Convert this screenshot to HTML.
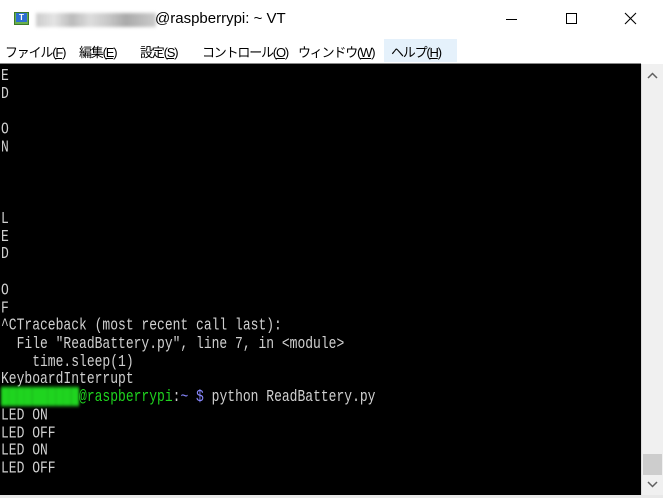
<!DOCTYPE html>
<html><head><meta charset="utf-8"><style>
*{margin:0;padding:0;box-sizing:border-box}
html,body{width:663px;height:498px;overflow:hidden}
body{background:#fff;position:relative;font-family:"Liberation Sans","Noto Sans CJK JP",sans-serif}
.title{position:absolute;left:0;top:0;width:663px;height:38px;background:#fff}
.title .txt{position:absolute;left:155px;top:10px;font-size:15px;color:#000}
.blur{position:absolute;top:13px;height:14px;filter:blur(1.5px)}
.menu{position:absolute;left:0;top:38px;width:663px;height:25px;background:#fff;font-size:13px;color:#000}
.menu span{position:absolute;top:4px;letter-spacing:-1.2px;white-space:nowrap}
.term{position:absolute;left:0;top:63px;width:641px;height:432px;background:#000;border-top:1px solid #888;overflow:hidden}
.term pre{position:absolute;left:1px;top:3px;font-family:"Liberation Mono",monospace;font-size:13px;line-height:13.74px;color:#d0d0d0;transform:scaleY(1.3);transform-origin:0 0;}
.sb{position:absolute;left:641px;top:64px;width:22px;height:431px;background:#f0f0f0;border-left:1px solid #ddd}
.bottom{position:absolute;left:0;top:495px;width:663px;height:3px;background:#e8e8e8}
</style></head><body>
<div class="title">
  <div style="position:absolute;left:14px;top:12px;width:15px;height:13px;background:#6ab04c;border:1px solid #3d7a2a"></div>
  <div style="position:absolute;left:16px;top:13px;width:11px;height:9px;background:#2e6fd1;color:#fff;font-size:8px;font-weight:bold;text-align:center;line-height:9px">T</div>
  <div class="blur" style="left:36px;width:120px;background:linear-gradient(90deg,#ccc 0,#e4e4e4 15%,#bbb 30%,#ddd 45%,#c8c8c8 60%,#aaa 75%,#ccc 100%)"></div>
  <div class="txt">@raspberrypi: ~ VT</div>
  <div style="position:absolute;left:506px;top:19px;width:11px;height:1px;background:#000"></div>
  <div style="position:absolute;left:566px;top:13px;width:11px;height:11px;border:1px solid #000"></div>
  <svg style="position:absolute;left:624px;top:12px" width="13" height="13"><path d="M1 1L12 12M12 1L1 12" stroke="#000" stroke-width="1.1"/></svg>
</div>
<div class="menu">
  <span style="left:5px">ファイル(<u>F</u>)</span>
  <span style="left:79px">編集(<u>E</u>)</span>
  <span style="left:140px">設定(<u>S</u>)</span>
  <span style="left:202px">コントロール(<u>O</u>)</span>
  <span style="left:298px">ウィンドウ(<u>W</u>)</span>
  <div style="position:absolute;left:384px;top:1px;width:73px;height:23px;background:#e5f1fb"></div>
  <span style="left:391px">ヘルプ(<u>H</u>)</span>
</div>
<div class="term"><pre>E
D

O
N



L
E
D

O
F
^CTraceback (most recent call last):
  File "ReadBattery.py", line 7, in &lt;module&gt;
    time.sleep(1)
KeyboardInterrupt
<span style="color:#1fd41f;filter:blur(1.2px)">&#9608;&#9608;&#9608;&#9608;&#9608;&#9608;&#9608;&#9608;&#9608;&#9608;</span><span style="color:#1fd41f">@raspberrypi</span>:<span style="color:#8888ff">~ $</span> python ReadBattery.py
LED ON
LED OFF
LED ON
LED OFF</pre></div>
<div class="sb">
  <svg style="position:absolute;left:5px;top:8px" width="11" height="7"><path d="M1 6L5.5 1.5L10 6" stroke="#606060" stroke-width="1.5" fill="none"/></svg>
  <div style="position:absolute;left:1px;top:390px;width:19px;height:21px;background:#cdcdcd"></div>
  <svg style="position:absolute;left:5px;top:417px" width="11" height="7"><path d="M1 1L5.5 5.5L10 1" stroke="#606060" stroke-width="1.5" fill="none"/></svg>
</div>
<div class="bottom"></div>
</body></html>
